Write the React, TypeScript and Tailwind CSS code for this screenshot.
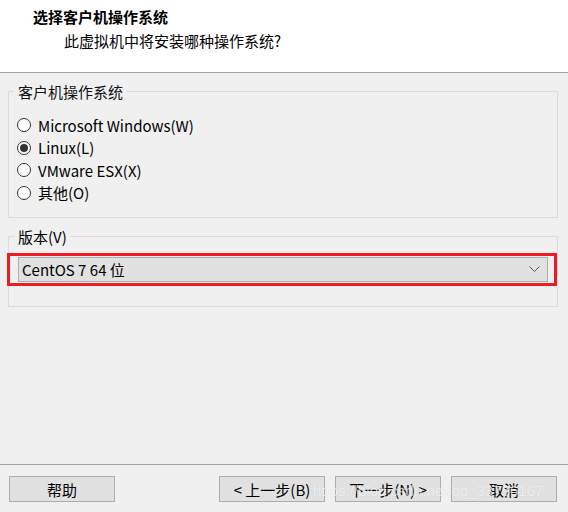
import React from "react";

const FONT = {
  fontFamily: '"Segoe UI", "Noto Sans CJK SC", "Noto Sans", sans-serif',
};

function Radio({ label, checked }: { label: string; checked?: boolean }) {
  return (
    <label className="flex h-[22.5px] items-center gap-[7px]">
      <span className="flex h-[14px] w-[14px] items-center justify-center rounded-full border border-[#333333] bg-white">
        {checked && <span className="h-[8px] w-[8px] rounded-full bg-[#333333]" />}
      </span>
      <span>{label}</span>
    </label>
  );
}

function Button({ children }: { children: React.ReactNode }) {
  return (
    <button className="flex h-[26px] w-[106px] items-center justify-center border border-[#adadad] bg-[#e1e1e1] text-[15px] text-black">
      {children}
    </button>
  );
}

export default function App() {
  return (
    <div
      className="relative flex h-[512px] w-[568px] flex-col bg-[#f0f0f0] text-[15px] leading-none text-black"
      style={FONT}
    >
      {/* header */}
      <div className="h-[73px] border-b border-[#a0a0a0] bg-white pl-[33px] pt-[9px]">
        <div className="font-bold">选择客户机操作系统</div>
        <div className="mt-[9px] pl-[31px]">此虚拟机中将安装哪种操作系统?</div>
      </div>

      <div className="flex flex-1 flex-col px-2">
        <fieldset className="mt-[11px] h-[134px] w-[550px] border border-[#dcdcdc]">
          <legend className="ml-[5px] px-[4px] text-[15px] text-[#111]">客户机操作系统</legend>
          <div className="mt-[15px] flex flex-col pl-[8px]">
            <Radio label="Microsoft Windows(W)" />
            <Radio label="Linux(L)" checked />
            <Radio label="VMware ESX(X)" />
            <Radio label="其他(O)" />
          </div>
        </fieldset>

        <fieldset className="mt-[11px] h-[78px] w-[550px] border border-[#dcdcdc]">
          <legend className="ml-[5px] px-[4px]">版本(V)</legend>
          <div className="-ml-[2px] mt-[9px] w-[550px] border-[3px] border-[#ed1c24] pb-[1px] pl-[8px] pr-[6px] pt-[1px]">
            <div className="flex h-[25px] items-center justify-between border border-[#adadad] bg-[#e1e1e1] pl-[3px] pr-[7px]">
              <span>CentOS 7 64 位</span>
              <svg width="11" height="7" viewBox="0 0 11 7" fill="none">
                <path d="M0.5 0.5 L5.5 5.5 L10.5 0.5" stroke="#555" strokeWidth="1" />
              </svg>
            </div>
          </div>
        </fieldset>
      </div>

      {/* footer */}
      <div className="h-[48px] border-t border-[#a0a0a0] pl-[9px] pt-[11px]">
        <div className="flex">
          <Button>帮助</Button>
          <div className="ml-[104px] flex gap-[10px]">
            <Button>&lt; 上一步(B)</Button>
            <Button>下一步(N) &gt;</Button>
            <Button>取消</Button>
          </div>
        </div>
      </div>

      <div
        className="pointer-events-none absolute left-[313px] top-[483px] text-[15px] text-white/70"
        style={{ fontFamily: '"Liberation Sans", Arial, sans-serif', textShadow: "0 0 1px rgba(0,0,0,0.12)" }}
      >
        https://blog.csdn.net/qq_33756167
      </div>
    </div>
  );
}
